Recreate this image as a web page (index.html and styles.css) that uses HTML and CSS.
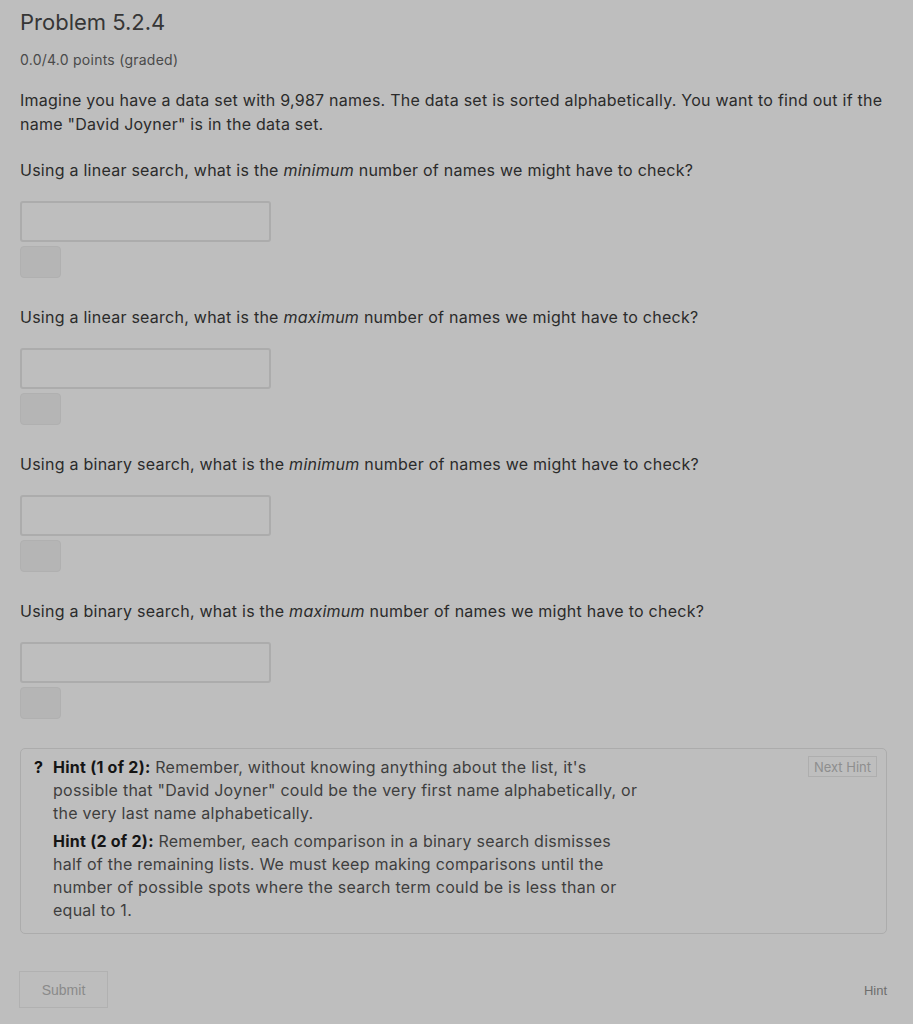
FILE: index.html
```
<!DOCTYPE html>
<html lang="en">
<head>
    <meta charset="UTF-8">
    <meta name="viewport" content="width=device-width, initial-scale=1.0">
    <title>Problem 5.2.4</title>
    <link rel="stylesheet" href="styles.css">
</head>
<body>
    <div class="problem">
        <h2 class="title">Problem 5.2.4</h2>
        <div class="points">0.0/4.0 points (graded)</div>

        <p class="intro">Imagine you have a data set with 9,987 names. The data set is sorted alphabetically. You want to find out if the name "David Joyner" is in the data set.</p>

        <div class="question">
            <p>Using a linear search, what is the <em>minimum</em> number of names we might have to check?</p>
            <input class="answer" type="text">
            <div class="status"></div>
        </div>

        <div class="question">
            <p>Using a linear search, what is the <em>maximum</em> number of names we might have to check?</p>
            <input class="answer" type="text">
            <div class="status"></div>
        </div>

        <div class="question">
            <p>Using a binary search, what is the <em>minimum</em> number of names we might have to check?</p>
            <input class="answer" type="text">
            <div class="status"></div>
        </div>

        <div class="question">
            <p>Using a binary search, what is the <em>maximum</em> number of names we might have to check?</p>
            <input class="answer" type="text">
            <div class="status"></div>
        </div>

        <div class="hints">
            <span class="hint-icon">?</span>
            <div class="hint-list">
                <p><b>Hint (1 of 2):</b> Remember, without knowing anything about the list, it's possible that "David Joyner" could be the very first name alphabetically, or the very last name alphabetically.</p>
                <p><b>Hint (2 of 2):</b> Remember, each comparison in a binary search dismisses half of the remaining lists. We must keep making comparisons until the number of possible spots where the search term could be is less than or equal to 1.</p>
            </div>
            <button class="btn-next">Next Hint</button>
        </div>

        <div class="actions">
            <button class="btn-submit">Submit</button>
            <span class="hint-link">Hint</span>
        </div>
    </div>
</body>
</html>
```

FILE: styles.css
```
* {
    margin: 0;
    padding: 0;
    box-sizing: border-box;
}

body {
    background-color: #bebebe;
    font-family: 'Inter', 'Noto Sans', sans-serif;
    letter-spacing: 0.25px;
    color: #2b2b2b;
}

.problem {
    padding: 8px 20px 0 20px;
}

.title {
    font-size: 22px;
    font-weight: 400;
    line-height: 28px;
    letter-spacing: 0;
    color: #363636;
}

.points {
    margin-top: 14px;
    font-size: 14px;
    line-height: 20px;
    color: #4a4a4a;
}

.intro {
    margin-top: 18px;
    font-size: 16px;
    line-height: 24px;
}

.question {
    margin-top: 22px;
}

.question + .question {
    margin-top: 27px;
}

.question p {
    font-size: 16px;
    line-height: 24px;
}

.answer {
    display: block;
    margin-top: 19px;
    width: 251px;
    height: 41px;
    background-color: #bebebe;
    border: 2px solid #acacac;
    border-radius: 3px;
}

.status {
    margin-top: 4px;
    width: 41px;
    height: 32px;
    background-color: #b5b5b5;
    border: 1px solid #b0b0b0;
    border-radius: 4px;
}

.hints {
    display: flex;
    margin: 29px 6px 0 0;
    padding: 7px 9px 11px 13px;
    border: 1px solid #acacac;
    border-radius: 5px;
    font-size: 16px;
    line-height: 23px;
    color: #3e3e3e;
}

.hint-icon {
    width: 19px;
    font-weight: 700;
    color: #111;
}

.hint-list {
    max-width: 588px;
}

.hint-list p + p {
    margin-top: 5px;
}

.hint-list b {
    color: #151515;
}

.btn-next {
    margin-left: auto;
    height: 21px;
    padding: 0 5px;
    background: none;
    border: 1px solid #aeaeae;
    font-family: 'Inter', sans-serif;
    font-size: 13px;
    color: #8e8e8e;
}

.actions {
    display: flex;
    justify-content: space-between;
    align-items: center;
    margin-top: 37px;
    padding-right: 6px;
    font-family: 'Liberation Sans', Arial, sans-serif;
    letter-spacing: 0;
    font-size: 14px;
}

.btn-submit {
    margin-left: -1px;
    width: 89px;
    height: 37px;
    background-color: #bdbdbd;
    border: 1px solid #b1b1b1;
    font-family: 'Liberation Sans', Arial, sans-serif;
    font-size: 14px;
    color: #8a8a8a;
}

.hint-link {
    margin-top: 2px;
    font-size: 13px;
    color: #6e6e6e;
}
```
